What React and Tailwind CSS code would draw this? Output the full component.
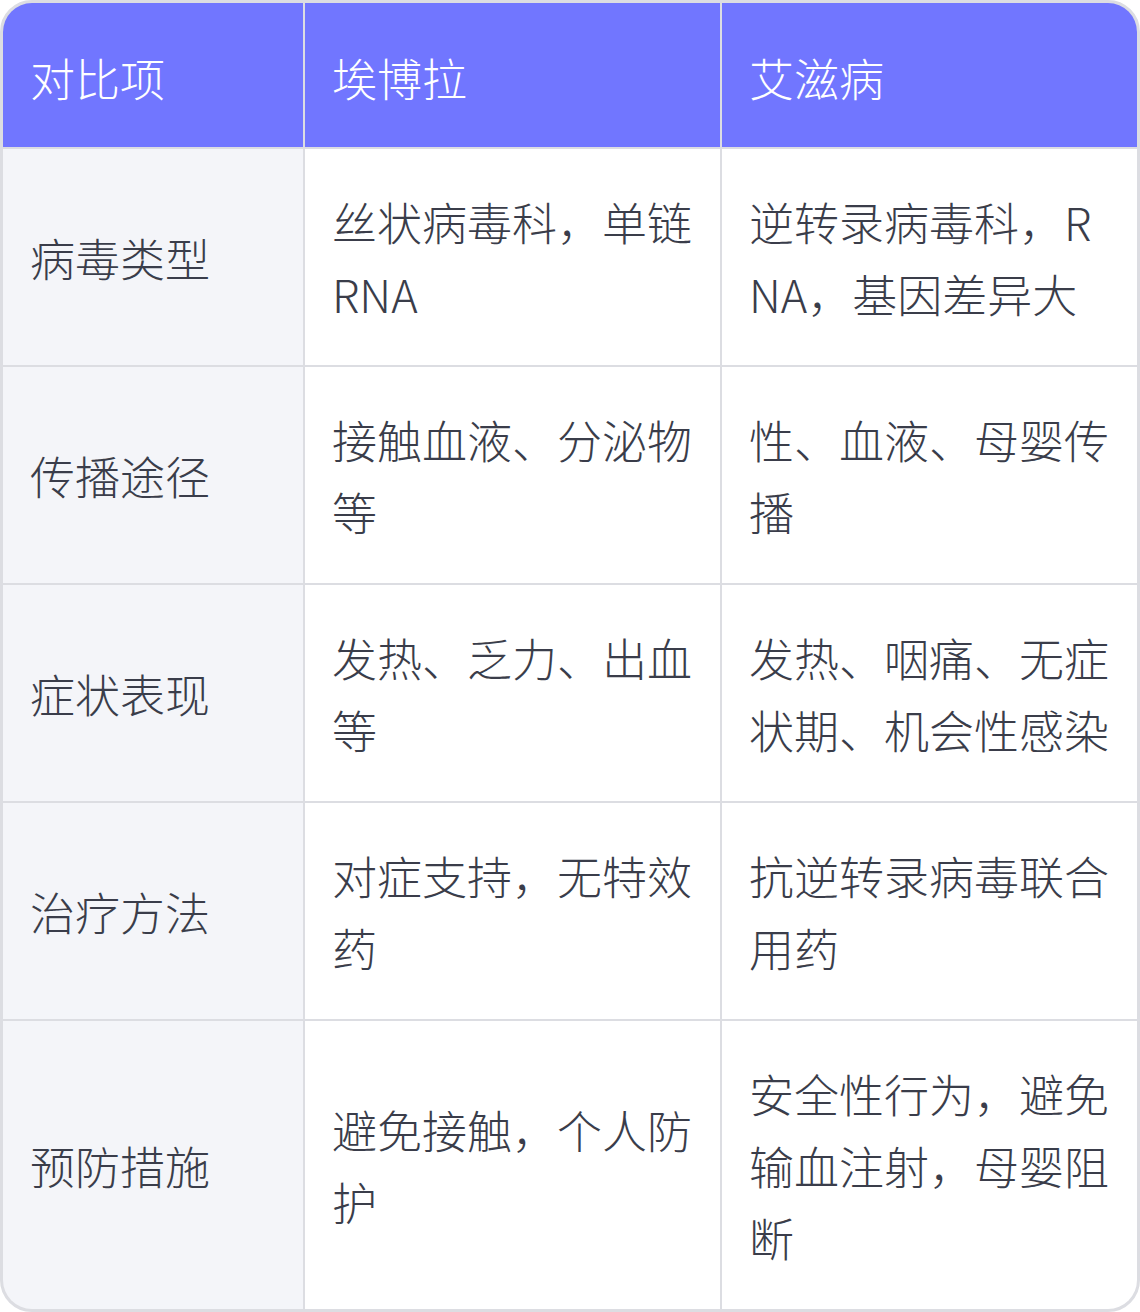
import React from 'react';

const headers = ['对比项', '埃博拉', '艾滋病'];

const rows = [
  ['病毒类型', '丝状病毒科，单链RNA', '逆转录病毒科，RNA，基因差异大'],
  ['传播途径', '接触血液、分泌物等', '性、血液、母婴传播'],
  ['症状表现', '发热、乏力、出血等', '发热、咽痛、无症状期、机会性感染'],
  ['治疗方法', '对症支持，无特效药', '抗逆转录病毒联合用药'],
  ['预防措施', '避免接触，个人防护', '安全性行为，避免输血注射，母婴阻断'],
];

const font = { fontFamily: '"Noto Sans CJK SC", "Noto Sans", sans-serif' };

export default function App() {
  return (
    <div className="w-[1140px] h-[1312px] bg-white" style={font}>
      <div className="border-[3px] border-[#dcdde2] rounded-[32px] overflow-hidden bg-[#dcdde2]">
        <div className="grid grid-cols-[300px_415px_415px] gap-[2px]">
          {/* Header */}
          {headers.map((h) => (
            <div
              key={h}
              className="bg-[#7176ff] text-white text-[45px] leading-[72px] font-light pl-[27px] pr-[24px] pt-[39px] pb-[33px]"
            >
              {h}
            </div>
          ))}

          {/* Body */}
          {rows.map((r) => (
            <React.Fragment key={r[0]}>
              <div className="bg-[#f4f5f9] text-[#3a3d4a] text-[45px] leading-[72px] font-light pl-[27px] pr-[24px] pt-[37px] pb-[35px] flex items-center">
                {r[0]}
              </div>
              <div className="bg-white text-[#3a3d4a] text-[45px] leading-[72px] font-light pl-[27px] pr-[24px] pt-[37px] pb-[35px] flex items-center break-all">
                <span>{r[1]}</span>
              </div>
              <div className="bg-white text-[#3a3d4a] text-[45px] leading-[72px] font-light pl-[27px] pr-[24px] pt-[37px] pb-[35px] flex items-center break-all">
                <span>{r[2]}</span>
              </div>
            </React.Fragment>
          ))}
        </div>
      </div>
    </div>
  );
}
